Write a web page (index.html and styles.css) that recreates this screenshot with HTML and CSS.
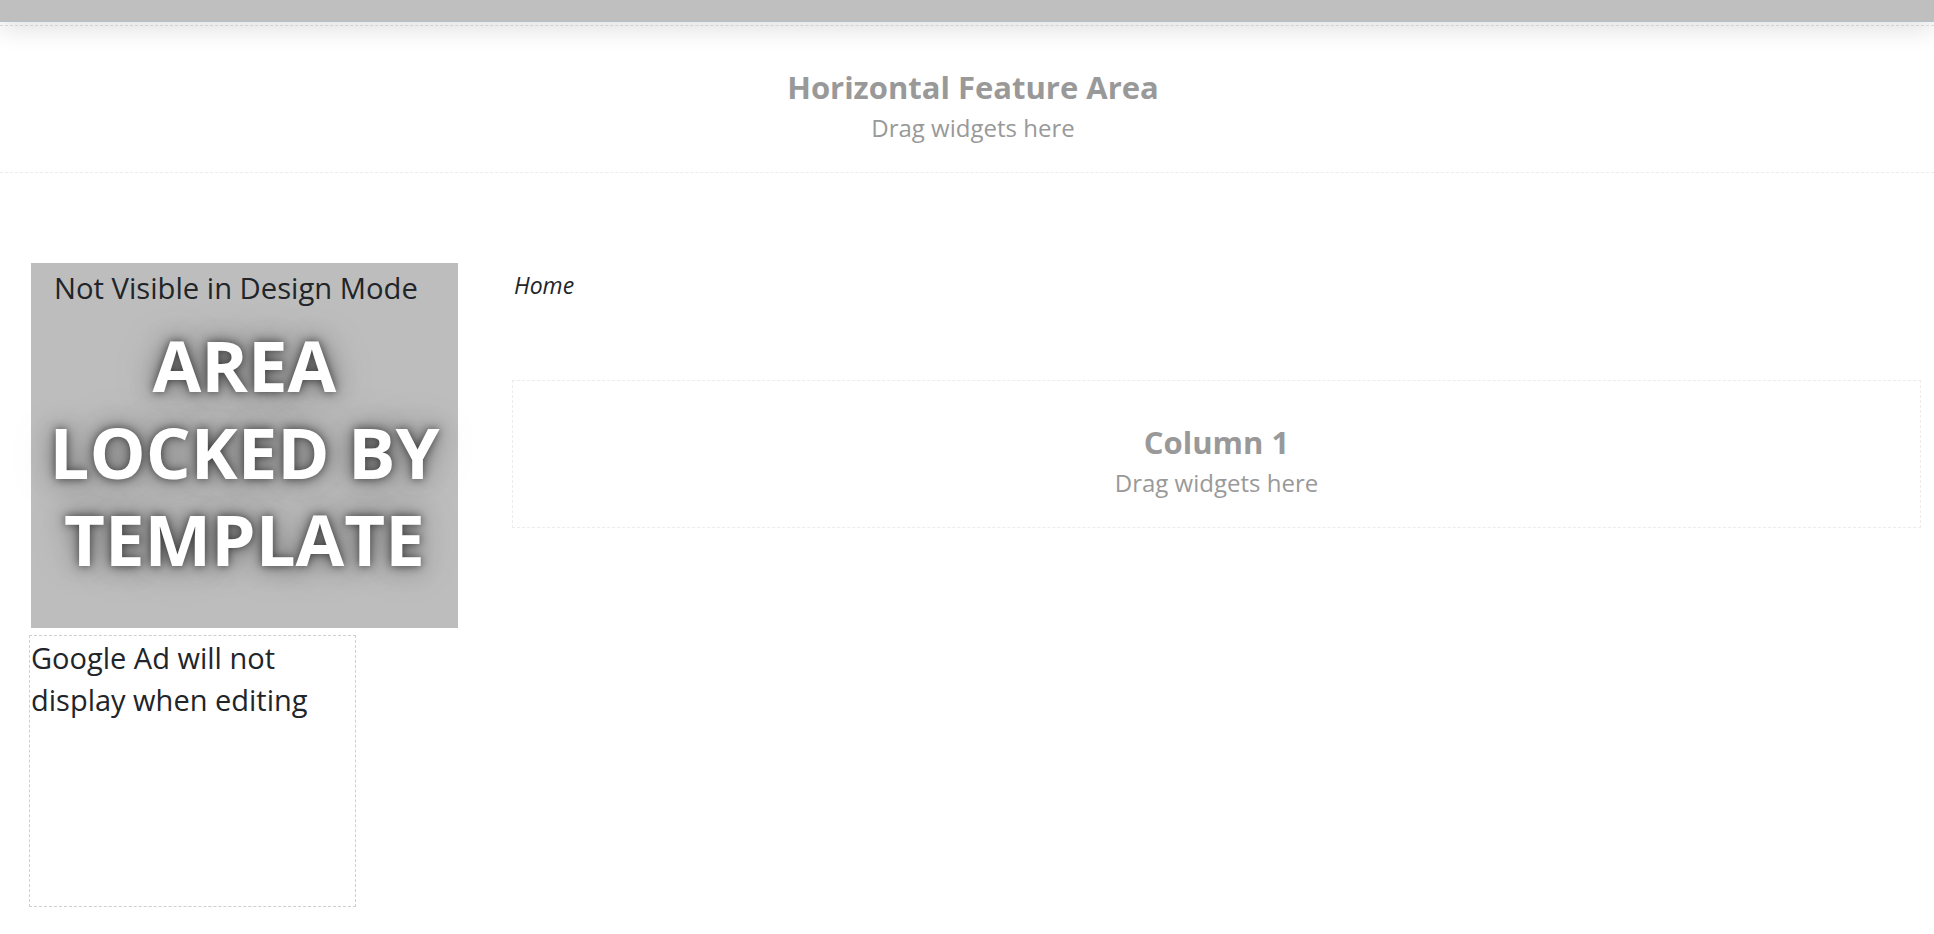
FILE: index.html
```html
<!DOCTYPE html>
<html lang="en">
<head>
<meta charset="utf-8">
<title>Design Mode</title>
<link rel="stylesheet" href="styles.css">
</head>
<body>
<div class="topbar"></div>
<section class="feature-area">
  <h2 class="zone-title">Horizontal Feature Area</h2>
  <div class="zone-sub">Drag widgets here</div>
</section>
<div class="layout">
  <aside class="sidebar">
    <div class="locked">
      <div class="locked-note">Not Visible in Design Mode</div>
      <div class="locked-text">AREA LOCKED BY TEMPLATE</div>
    </div>
    <div class="ad-box">Google Ad will not display when editing</div>
  </aside>
  <main class="main">
    <div class="breadcrumb">Home</div>
    <section class="column-zone">
      <h2 class="zone-title">Column 1</h2>
      <div class="zone-sub">Drag widgets here</div>
    </section>
  </main>
</div>
</body>
</html>
```

FILE: styles.css
```css
* { box-sizing: border-box; }
html, body { margin: 0; padding: 0; background: #fff; }
body {
  font-family: "Open Sans", "Noto Sans", "Liberation Sans", sans-serif;
  color: #212529;
  width: 1934px;
  height: 934px;
  overflow: hidden;
}
.topbar {
  position: relative;
  z-index: 2;
  height: 22px;
  background: #bfbfbf;
  border-bottom: 1px solid #b3c0ca;
  box-shadow: 0 6px 26px rgba(0, 0, 0, 0.14);
}
.feature-area {
  margin-top: 3px;
  border-top: 1px dashed #e2e2e2;
  border-bottom: 1px dashed #ececec;
  height: 148px;
  padding: 42px 0 0 12px;
  text-align: center;
}
.zone-title {
  margin: 0;
  font-size: 31px;
  line-height: 38px;
  font-weight: 700;
  color: #999;
}
.zone-sub {
  margin-top: 4px;
  font-size: 24px;
  line-height: 1.5;
  color: #999;
}
.layout {
  display: flex;
  gap: 54px;
  padding: 90px 13px 0 31px;
}
.sidebar {
  width: 427px;
  flex: none;
}
.locked {
  height: 365px;
  background: #bdbdbd;
  padding: 4px 0 0 23px;
}
.locked-note {
  font-size: 29.2px;
  line-height: 1.5;
  color: #212529;
}
.locked-text {
  margin: 10px 0 0 -23px;
  font-size: 70.7px;
  line-height: 87px;
  font-weight: 700;
  color: #fff;
  text-align: center;
  text-shadow: 0 0 10px rgba(0, 0, 0, 0.6), 0 0 24px rgba(0, 0, 0, 0.45), 0 0 50px rgba(0, 0, 0, 0.18);
}
.ad-box {
  margin: 7px 0 0 -2px;
  width: 327px;
  height: 272px;
  border: 1px dashed #cfcfcf;
  padding: 1px 0 0 1px;
  font-size: 29px;
  line-height: 42px;
  color: #212529;
}
.main {
  flex: 1;
  min-width: 0;
}
.breadcrumb {
  padding: 5px 0 0 2px;
  font-size: 23px;
  line-height: 1.5;
  font-style: italic;
  color: #212529;
  height: 117px;
}
.column-zone {
  border: 1px dashed #ececec;
  height: 148px;
  padding-top: 42px;
  text-align: center;
}
```
